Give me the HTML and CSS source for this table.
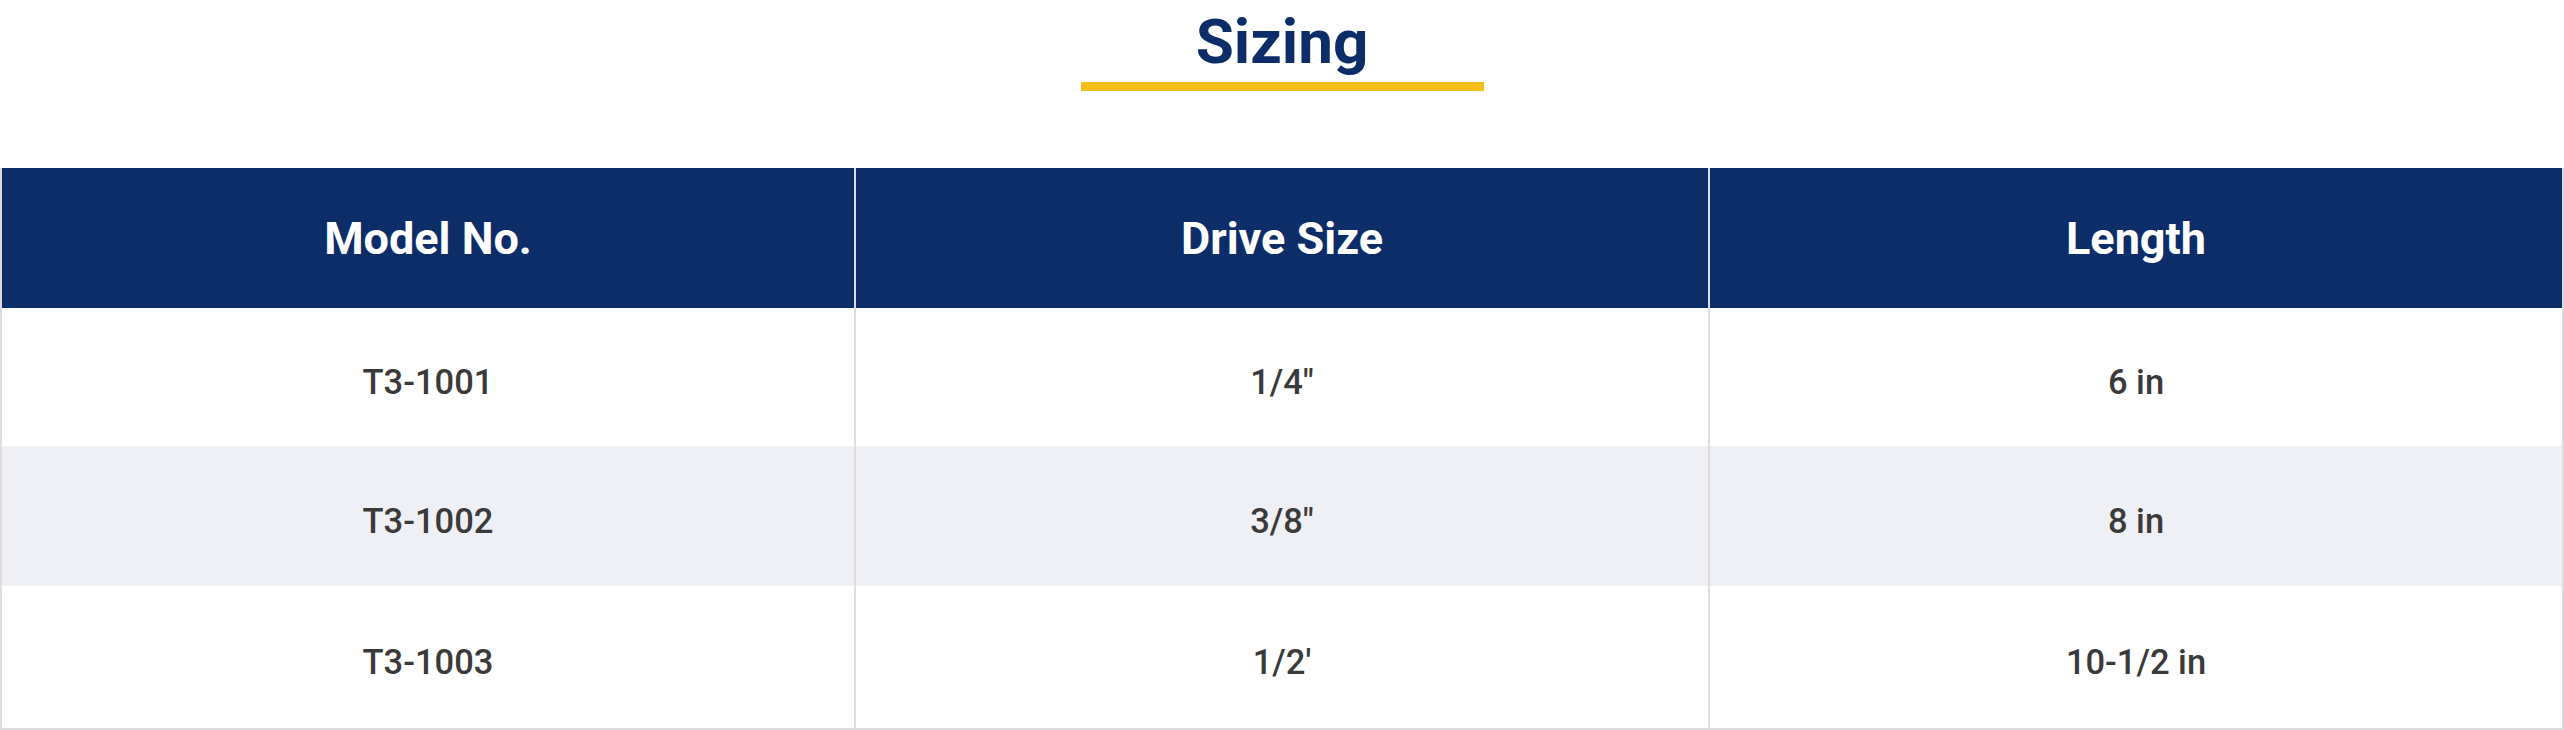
FILE: index.html
```html
<!DOCTYPE html>
<html lang="en">
<head>
<meta charset="utf-8">
<title>Sizing</title>
<link rel="stylesheet" href="styles.css">
</head>
<body>
<section class="sizing">
  <div class="heading">
    <h2 class="heading-title">Sizing</h2>
    <div class="heading-bar"></div>
  </div>
  <table class="size-table">
    <thead>
      <tr>
        <th>Model No.</th>
        <th>Drive Size</th>
        <th>Length</th>
      </tr>
    </thead>
    <tbody>
      <tr class="row-first">
        <td>T3-1001</td>
        <td>1/4"</td>
        <td>6 in</td>
      </tr>
      <tr class="alt">
        <td>T3-1002</td>
        <td>3/8"</td>
        <td>8 in</td>
      </tr>
      <tr class="row-last">
        <td>T3-1003</td>
        <td>1/2'</td>
        <td>10-1/2 in</td>
      </tr>
    </tbody>
  </table>
</section>
</body>
</html>
```

FILE: styles.css
```css
html, body {
  margin: 0;
  padding: 0;
  background: #ffffff;
}

.sizing {
  width: 2564px;
  font-family: Roboto, "Liberation Sans", sans-serif;
}

.heading {
  display: flex;
  flex-direction: column;
  align-items: center;
  padding-top: 11px;
}

.heading-title {
  margin: 0;
  font-size: 62px;
  line-height: 62px;
  font-weight: 700;
  color: #0d2d69;
}

.heading-bar {
  width: 403px;
  height: 9px;
  margin-top: 9px;
  background: #f5bf19;
}

.size-table {
  width: 100%;
  margin-top: 77px;
  border-collapse: separate;
  border-spacing: 0;
  table-layout: fixed;
  border-left: 1px solid #dcdcdc;
  border-right: 1px solid #dcdcdc;
  border-bottom: 2px solid #dcdcdc;
}

.size-table th,
.size-table td {
  padding: 0;
  text-align: center;
  vertical-align: middle;
  border-left: 1px solid #dcdcdc;
  border-right: 1px solid #dcdcdc;
}

.size-table th {
  height: 140px;
  background: #0d2d69;
  color: #ffffff;
  font-size: 45px;
  font-weight: 700;
}

.size-table td {
  height: 140px;
  color: #3a3a3a;
  font-size: 34.5px;
  font-weight: 500;
  padding-top: 10px;
  box-sizing: border-box;
}

.size-table tr.row-first td {
  height: 138px;
}

.size-table tr.row-last td {
  height: 142px;
}

.size-table tr.alt td {
  background: #eff0f5;
}
```
